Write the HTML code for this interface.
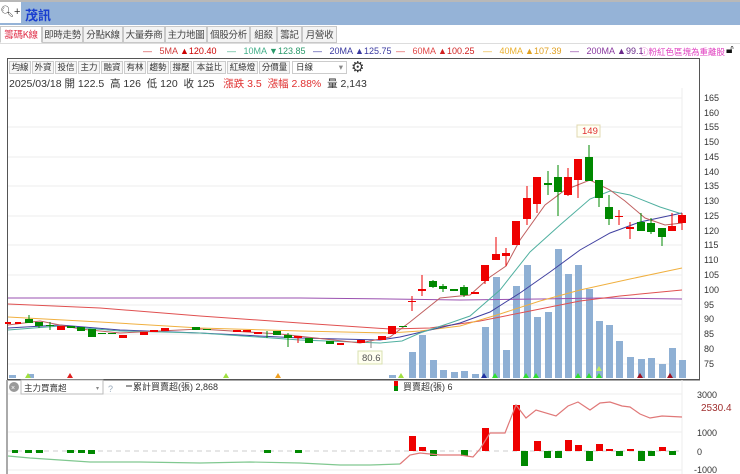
<!DOCTYPE html>
<html><head><meta charset="utf-8"><style>
*{margin:0;padding:0;box-sizing:border-box}
body{width:740px;height:474px;overflow:hidden;background:#fff;font-family:"Liberation Sans","Noto Sans CJK TC",sans-serif;position:relative}
.top{position:absolute;left:0;top:0;width:740px;height:25px;background:#95b3d7;border-top:2px solid #b8b8b8}
.srch{position:absolute;left:0;top:2px;width:21px;height:21px;background:#fff;font-size:11px;line-height:21px;color:#333}
.name{position:absolute;left:25px;top:5px;font-size:13px;font-weight:bold;color:#1a3fd0;font-family:"Noto Sans CJK TC",sans-serif}
.tab{position:absolute;top:26px;height:17px;border:1px solid #c8c8c8;background:#f3f3f3;font-size:9.5px;line-height:15px;color:#444;text-align:center;font-family:"Noto Sans CJK TC",sans-serif;white-space:nowrap;overflow:hidden;letter-spacing:-0.3px}
.tab.a{background:#fff;color:#e0304a;border-bottom-color:#fff}
.leg{position:absolute;top:46px;font-size:9px;white-space:nowrap;font-family:"Liberation Sans","Noto Sans CJK TC",sans-serif}
.btn{position:absolute;top:61px;height:13px;border:1px solid #ccc;background:#f6f6f6;font-size:8.5px;line-height:11px;color:#333;text-align:center;font-family:"Noto Sans CJK TC",sans-serif;white-space:nowrap;overflow:hidden}
</style></head><body>
<div class="top"></div>
<div class="srch">🔍︎+</div>
<div class="name">茂訊</div>
<div style="position:absolute;left:0;top:43px;width:740px;height:1px;background:#ddd"></div>
<div class="tab a" style="left:0;width:42px">籌碼K線</div>
<div class="tab" style="left:42px;width:41px">即時走勢</div>
<div class="tab" style="left:83px;width:40px">分點K線</div>
<div class="tab" style="left:123px;width:42px">大量券商</div>
<div class="tab" style="left:165px;width:42px">主力地圖</div>
<div class="tab" style="left:207px;width:43px">個股分析</div>
<div class="tab" style="left:250px;width:27px">組殺</div>
<div class="tab" style="left:277px;width:25px">籌記</div>
<div class="tab" style="left:302px;width:35px">月營收</div>
<div class="leg" style="left:143px;color:#d23c3c">—&nbsp;&nbsp;&nbsp;5MA <span style="color:#c00">▲120.40</span></div>
<div class="leg" style="left:227px;color:#44b08a">—&nbsp;&nbsp;&nbsp;10MA <span style="color:#2a9a6a">▼123.85</span></div>
<div class="leg" style="left:313px;color:#3a3aa0">—&nbsp;&nbsp;&nbsp;20MA <span style="color:#3a3aa0">▲125.75</span></div>
<div class="leg" style="left:396px;color:#e04848">—&nbsp;&nbsp;&nbsp;60MA <span style="color:#d02020">▲100.25</span></div>
<div class="leg" style="left:483px;color:#eab030">—&nbsp;&nbsp;&nbsp;40MA <span style="color:#e0a020">▲107.39</span></div>
<div class="leg" style="left:570px;color:#8a3aa0">—&nbsp;&nbsp;&nbsp;200MA <span style="color:#6a2a8a">▲99.1</span></div>
<div class="leg" style="left:640px;color:#e040c0;font-size:8.5px">ⓘ粉紅色區塊為重離股</div>
<div class="leg" style="left:726px;top:42px;font-size:12px;color:#111">🔓︎</div>
<div style="position:absolute;left:7px;top:58px;width:693px;height:322px;border:1px solid #555;border-right:1px solid #555"></div>
<div class="btn" style="left:9px;width:22px">均線</div>
<div class="btn" style="left:32px;width:22px">外資</div>
<div class="btn" style="left:55px;width:22px">投信</div>
<div class="btn" style="left:78px;width:22px">主力</div>
<div class="btn" style="left:101px;width:22px">融資</div>
<div class="btn" style="left:124px;width:22px">有林</div>
<div class="btn" style="left:147px;width:22px">趨勢</div>
<div class="btn" style="left:170px;width:22px">撐壓</div>
<div class="btn" style="left:193px;width:33px">本益比</div>
<div class="btn" style="left:227px;width:31px">紅綠燈</div>
<div class="btn" style="left:259px;width:31px">分價量</div>
<div class="btn" style="left:292px;width:55px;background:#fff;text-align:left;padding-left:3px">日線<span style="float:right;padding-right:3px;color:#888">▾</span></div>
<div style="position:absolute;left:351px;top:58px;font-size:15px;color:#333">⚙</div>
<div style="position:absolute;left:9px;top:76px;font-size:10.5px;color:#333;white-space:nowrap;font-family:'Liberation Sans','Noto Sans CJK TC',sans-serif">2025/03/18 開 122.5&nbsp; 高 126&nbsp; 低 120&nbsp; 收 125&nbsp;&nbsp; <span style="color:#e03030">漲跌 3.5&nbsp; 漲幅 2.88%</span>&nbsp; 量 2,143</div>

<svg width="740" height="474" style="position:absolute;left:0;top:0" font-family="Liberation Sans, sans-serif">
<g stroke="#eee" stroke-width="1">
<line x1="8" y1="98" x2="682" y2="98"/><line x1="8" y1="127" x2="682" y2="127"/><line x1="8" y1="157" x2="682" y2="157"/><line x1="8" y1="186" x2="682" y2="186"/><line x1="8" y1="216" x2="682" y2="216"/><line x1="8" y1="245" x2="682" y2="245"/><line x1="8" y1="275" x2="682" y2="275"/><line x1="8" y1="305" x2="682" y2="305"/><line x1="8" y1="334" x2="682" y2="334"/><line x1="8" y1="364" x2="682" y2="364"/>
<line x1="682" y1="88" x2="682" y2="378"/>
</g>
<g font-size="9" fill="#333">
<text x="704" y="101">165</text><text x="704" y="116">160</text><text x="704" y="130">155</text><text x="704" y="145">150</text><text x="704" y="160">145</text><text x="704" y="175">140</text><text x="704" y="189">135</text><text x="704" y="204">130</text><text x="704" y="219">125</text><text x="704" y="234">120</text><text x="704" y="248">115</text><text x="704" y="263">110</text><text x="704" y="278">105</text><text x="704" y="293">100</text><text x="704" y="308">95</text><text x="704" y="322">90</text><text x="704" y="337">85</text><text x="704" y="352">80</text><text x="704" y="367">75</text>
</g>
<g fill="#8fb0d4">
<rect x="9" y="375" width="7" height="3"/><rect x="28" y="374" width="6" height="4"/><rect x="389" y="375" width="7" height="3"/>
<rect x="409" y="352" width="7" height="26"/><rect x="419" y="335" width="7" height="43"/><rect x="430" y="360" width="7" height="18"/><rect x="440" y="370" width="7" height="8"/><rect x="451" y="372" width="7" height="6"/><rect x="461" y="371" width="7" height="7"/><rect x="472" y="374" width="7" height="4"/>
<rect x="482" y="327" width="7" height="51"/><rect x="493" y="277" width="7" height="101"/><rect x="503" y="350" width="7" height="28"/><rect x="513" y="286" width="7" height="92"/><rect x="524" y="265" width="7" height="113"/><rect x="534" y="317" width="7" height="61"/><rect x="545" y="312" width="7" height="66"/><rect x="555" y="249" width="7" height="129"/><rect x="565" y="274" width="7" height="104"/><rect x="575" y="265" width="7" height="113"/><rect x="586" y="289" width="7" height="89"/><rect x="596" y="321" width="7" height="57"/><rect x="606" y="325" width="7" height="53"/><rect x="616" y="341" width="7" height="37"/><rect x="627" y="357" width="7" height="21"/><rect x="638" y="359" width="7" height="19"/><rect x="648" y="358" width="7" height="20"/><rect x="659" y="364" width="7" height="14"/><rect x="669" y="348" width="7" height="30"/><rect x="679" y="360" width="7" height="18"/>
</g>
<g>
<polygon points="25,378 28,373 31,378" fill="#a0e040"/><polygon points="67,378 70,373 73,378" fill="#e02020"/><polygon points="223,378 226,373 229,378" fill="#a0e040"/><polygon points="275,378 278,373 281,378" fill="#f0a020"/><polygon points="398,378 401,373 404,378" fill="#a0e040"/>
<polygon points="481,378 484,373 487,378" fill="#2030a0"/><polygon points="492,378 495,373 498,378" fill="#30e030"/><polygon points="523,378 526,373 529,378" fill="#30e030"/><polygon points="533,378 536,373 539,378" fill="#30e030"/><polygon points="575,378 578,373 581,378" fill="#30e030"/><polygon points="586,378 589,373 592,378" fill="#30e030"/><polygon points="596,378 599,373 602,378" fill="#30e030"/><polygon points="596,371 599,366 602,371" fill="#c0f060"/><polygon points="637,378 640,373 643,378" fill="#a01020"/><polygon points="667,378 670,373 673,378" fill="#a01020"/>
</g>
<g fill="none" stroke-width="1">
<polyline stroke="#9a50b0" points="8,298 150,298 300,298 390,299 460,300 540,299 600,298 682,299"/>
<polyline stroke="#e05050" points="8,304 100,308 200,316 300,323 390,329 430,328 480,321 530,311 580,301 620,296 682,290"/>
<polyline stroke="#f0b040" points="8,317 100,322 200,328 300,331 390,333 420,331 460,326 500,314 540,301 580,290 630,279 682,268"/>
<polyline stroke="#4040a0" points="8,328 60,325 120,330 200,333 300,338 380,340 400,337 430,330 460,323 490,312 520,293 550,272 580,250 610,233 640,222 682,213"/>
<polyline stroke="#50b0a0" points="8,330 60,326 120,331 200,333 300,340 380,343 402,341 420,333 450,323 470,316 500,290 530,252 560,225 590,199 610,191 630,195 660,207 682,214"/>
<polyline stroke="#c06060" points="8,325 40,321 80,329 120,333 200,329 280,334 360,343 390,337 410,322 440,298 470,295 490,277 506,266 520,240 545,205 565,190 590,180 610,190 625,201 645,218 665,225 682,223"/>
</g>
<g>
<rect x="5" y="322" width="6" height="2" fill="#e00"/><rect x="15" y="322" width="6" height="2" fill="#e00"/>
<line x1="29" y1="315" x2="29" y2="322" stroke="#080"/><rect x="25" y="319" width="8" height="4" fill="#080"/>
<line x1="39" y1="322" x2="39" y2="328" stroke="#080"/><rect x="35" y="322" width="8" height="4" fill="#080"/>
<line x1="50" y1="322" x2="50" y2="330" stroke="#080"/><rect x="46" y="325" width="8" height="1" fill="#080"/>
<rect x="57" y="326" width="8" height="4" fill="#e00"/><rect x="67" y="326" width="8" height="2" fill="#080"/>
<rect x="77" y="327" width="8" height="4" fill="#080"/>
<rect x="88" y="329" width="8" height="8" fill="#080"/>
<rect x="98" y="333" width="8" height="1" fill="#080"/><rect x="108" y="333" width="8" height="1" fill="#080"/>
<rect x="119" y="335" width="8" height="3" fill="#e00"/>
<rect x="140" y="332" width="8" height="3" fill="#e00"/><rect x="150" y="330" width="8" height="2" fill="#e00"/><rect x="161" y="328" width="8" height="3" fill="#e00"/>
<rect x="192" y="327" width="8" height="3" fill="#080"/><rect x="203" y="329" width="8" height="1" fill="#080"/>
<rect x="233" y="330" width="8" height="2" fill="#e00"/><rect x="243" y="330" width="8" height="2" fill="#e00"/><rect x="254" y="332" width="8" height="2" fill="#e00"/>
<line x1="267" y1="331" x2="267" y2="338" stroke="#080"/>
<rect x="273" y="331" width="8" height="4" fill="#080"/>
<line x1="288" y1="333" x2="288" y2="347" stroke="#080"/><rect x="284" y="335" width="8" height="3" fill="#080"/>
<line x1="298" y1="336" x2="298" y2="343" stroke="#e00"/><rect x="294" y="336" width="8" height="2" fill="#e00"/>
<rect x="305" y="338" width="8" height="5" fill="#080"/>
<rect x="326" y="341" width="8" height="3" fill="#080"/><rect x="337" y="343" width="7" height="2" fill="#e00"/>
<rect x="357" y="340" width="8" height="3" fill="#e00"/>
<line x1="371" y1="340" x2="371" y2="348" stroke="#888"/>
<rect x="378" y="336" width="8" height="4" fill="#e00"/>
<rect x="388" y="326" width="8" height="8" fill="#e00"/>
</g>
<rect x="358" y="351" width="24" height="13" fill="#fffff0" stroke="#d8e0b0"/><text x="362" y="361" font-size="9.5" fill="#555">80.6</text>
<g>
<rect x="399" y="326" width="8" height="1" fill="#080"/>
<line x1="412" y1="296" x2="412" y2="311" stroke="#e00"/><rect x="408" y="301" width="8" height="1" fill="#e00"/>
<line x1="422" y1="275" x2="422" y2="296" stroke="#e00"/><rect x="418" y="289" width="8" height="2" fill="#e00"/>
<line x1="433" y1="280" x2="433" y2="288" stroke="#080"/><rect x="429" y="281" width="8" height="6" fill="#080"/>
<line x1="443" y1="284" x2="443" y2="292" stroke="#080"/><rect x="439" y="286" width="8" height="3" fill="#080"/>
<rect x="450" y="289" width="8" height="2" fill="#080"/>
<line x1="464" y1="285" x2="464" y2="297" stroke="#080"/><rect x="460" y="287" width="8" height="8" fill="#080"/>
<rect x="471" y="292" width="8" height="2" fill="#e00"/>
<line x1="485" y1="278" x2="485" y2="284" stroke="#e00"/><rect x="481" y="265" width="8" height="16" fill="#e00"/>
<line x1="496" y1="237" x2="496" y2="260" stroke="#e00"/><rect x="492" y="254" width="8" height="6" fill="#e00"/>
<line x1="506" y1="248" x2="506" y2="266" stroke="#e00"/><rect x="502" y="253" width="8" height="3" fill="#e00"/>
<rect x="512" y="221" width="8" height="24" fill="#e00"/>
<line x1="527" y1="186" x2="527" y2="225" stroke="#e00"/><rect x="523" y="198" width="8" height="21" fill="#e00"/>
<line x1="537" y1="177" x2="537" y2="213" stroke="#e00"/><rect x="533" y="177" width="8" height="27" fill="#e00"/>
<line x1="548" y1="171" x2="548" y2="195" stroke="#080"/><rect x="544" y="183" width="8" height="2" fill="#080"/>
<line x1="558" y1="165" x2="558" y2="216" stroke="#080"/><rect x="554" y="177" width="8" height="15" fill="#080"/>
<line x1="568" y1="168" x2="568" y2="196" stroke="#e00"/><rect x="564" y="177" width="8" height="18" fill="#e00"/>
<line x1="578" y1="180" x2="578" y2="198" stroke="#e00"/><rect x="574" y="159" width="8" height="21" fill="#e00"/>
<line x1="589" y1="145" x2="589" y2="157" stroke="#080"/><rect x="585" y="157" width="8" height="24" fill="#080"/>
<line x1="599" y1="198" x2="599" y2="207" stroke="#080"/><rect x="595" y="180" width="8" height="18" fill="#080"/>
<line x1="609" y1="195" x2="609" y2="225" stroke="#080"/><rect x="605" y="207" width="8" height="12" fill="#080"/>
<line x1="619" y1="210" x2="619" y2="225" stroke="#e00"/><rect x="615" y="216" width="8" height="1" fill="#e00"/>
<line x1="630" y1="222" x2="630" y2="239" stroke="#e00"/><rect x="626" y="227" width="8" height="2" fill="#e00"/>
<line x1="641" y1="213" x2="641" y2="230" stroke="#080"/><rect x="637" y="222" width="8" height="9" fill="#080"/>
<line x1="651" y1="218" x2="651" y2="234" stroke="#080"/><rect x="647" y="223" width="8" height="9" fill="#080"/>
<line x1="662" y1="236" x2="662" y2="246" stroke="#080"/><rect x="658" y="228" width="8" height="9" fill="#080"/>
<line x1="672" y1="213" x2="672" y2="230" stroke="#e00"/><rect x="668" y="226" width="8" height="5" fill="#e00"/>
<line x1="682" y1="213" x2="682" y2="230" stroke="#e00"/><rect x="678" y="215" width="8" height="8" fill="#e00"/>
</g>
<rect x="577" y="125" width="23" height="12" fill="#fffff4" stroke="#e0d8b0"/><text x="582" y="134" font-size="9.5" fill="#e03030">149</text>
<line x1="8" y1="380" x2="700" y2="380" stroke="#555"/>
<line x1="7" y1="380" x2="7" y2="474" stroke="#555"/>
<line x1="682" y1="380" x2="682" y2="474" stroke="#eee"/>
<g stroke="#eee"><line x1="8" y1="394" x2="682" y2="394"/><line x1="8" y1="432" x2="682" y2="432"/><line x1="8" y1="470" x2="682" y2="470"/></g>
<line x1="8" y1="451" x2="682" y2="451" stroke="#ccc" stroke-dasharray="5,4"/>
<circle cx="14" cy="387" r="5" fill="#999"/><text x="11" y="390" font-size="7" fill="#fff">×</text>
<rect x="21" y="380" width="82" height="14" fill="#fff" stroke="#bbb"/><text x="24" y="391" font-size="8.5" fill="#333" font-family="Noto Sans CJK TC">主力買賣超</text><text x="96" y="390" font-size="6" fill="#888">▾</text>
<text x="108" y="392" font-size="9" fill="#9ab">?</text>
<line x1="126" y1="386" x2="132" y2="386" stroke="#333"/>
<text x="133" y="390" font-size="9" fill="#333" font-family="Liberation Sans, Noto Sans CJK TC">累計買賣超(張) 2,868</text>
<rect x="394" y="381" width="4" height="5" fill="#e00"/><rect x="394" y="386" width="4" height="5" fill="#080"/>
<text x="403" y="390" font-size="9" fill="#333" font-family="Liberation Sans, Noto Sans CJK TC">買賣超(張) 6</text>
<g font-size="9" fill="#333"><text x="697" y="398">3000</text><text x="697" y="436">1000</text><text x="697" y="455">0</text><text x="694" y="473">-1000</text></g>
<text x="701" y="411" font-size="10" fill="#a03030">2530.4</text>
<g fill="#080"><rect x="12" y="450" width="6" height="3"/><rect x="25" y="450" width="7" height="3"/><rect x="36" y="450" width="7" height="3"/><rect x="67" y="450" width="7" height="3"/><rect x="78" y="450" width="7" height="3"/><rect x="88" y="450" width="7" height="4"/><rect x="264" y="450" width="7" height="3"/><rect x="295" y="450" width="7" height="3"/><rect x="430" y="450" width="7" height="6"/><rect x="461" y="450" width="7" height="6"/><rect x="521" y="451" width="7" height="15"/><rect x="544" y="451" width="7" height="7"/><rect x="555" y="451" width="7" height="7"/><rect x="586" y="451" width="7" height="10"/><rect x="616" y="451" width="7" height="5"/><rect x="638" y="451" width="7" height="10"/><rect x="648" y="451" width="7" height="5"/><rect x="669" y="451" width="7" height="4"/></g>
<g fill="#e00"><rect x="409" y="436" width="7" height="15"/><rect x="419" y="447" width="7" height="4"/><rect x="482" y="428" width="7" height="23"/><rect x="513" y="405" width="7" height="46"/><rect x="534" y="441" width="7" height="10"/><rect x="565" y="440" width="7" height="11"/><rect x="575" y="445" width="7" height="6"/><rect x="596" y="444" width="7" height="7"/><rect x="606" y="449" width="7" height="2"/><rect x="627" y="449" width="7" height="2"/><rect x="659" y="447" width="7" height="4"/></g>
<polyline fill="none" stroke="#80c890" stroke-width="1.2" points="8,456 30,458 60,460 90,462 140,462 200,463 250,462 300,463 340,465 370,465 400,464"/>
<polyline fill="none" stroke="#e07878" stroke-width="1.2" points="400,464 410,455 420,453 440,455 460,455 473,457 480,449 490,433 505,433 516,405 526,418 536,410 556,416 568,406 578,402 590,410 600,403 610,402 622,406 630,407 640,414 650,418 662,416 682,417"/>
</svg>
</body></html>
